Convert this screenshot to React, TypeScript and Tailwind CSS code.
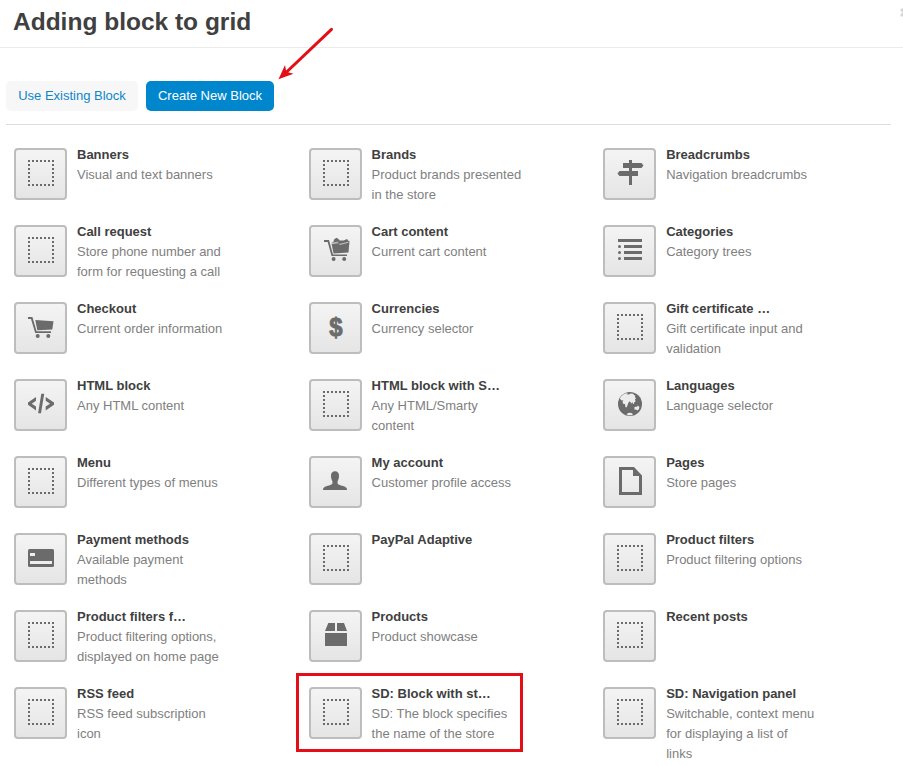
import type { ReactNode } from "react";

const INK = "#6b6b6b";

function Wheels({ x }: { x: number }) {
  return (
    <>
      <circle cx={x} cy={34} r={2} />
      <circle cx={x + 10.6} cy={34} r={2} />
    </>
  );
}

const icons: Record<string, ReactNode> = {
  block: (
    <g stroke={INK} strokeWidth={2} strokeDasharray="2 2" fill="none" shapeRendering="crispEdges">
      <path d="M14 13H40M14 37H40M15 16V36M39 16V36" />
    </g>
  ),
  signpost: (
    <path d="M26 12h3v3h9.500l2 2.500-2 2.500H29v3h6v5h-6v9h-3v-9h-9.500l-2-2.500 2-2.500H26v-3h-6v-5h6z" />
  ),
  cartFull: (
    <>
      <path d="M15 15h5l4 14.500h14V31H22.500L18.700 17H15z" />
      <path d="M22 17.800l2.500-1 .5-2.400 2.400-1.600 2 1.200 1.300 1.400 4 .2 3.300-1.600 1.300 1.800 1.200.2-.3 3.200z" />
      <path d="M22.500 18.500l17.800-.5-.8 9.400-15 1z" />
      <path d="M22.300 18.400l7-1.300M30.500 19.600l9-2.400" stroke="#ededed" strokeWidth=".7" fill="none" />
      <Wheels x={24.6} />
    </>
  ),
  cart: (
    <>
      <path d="M14 15h4.400l4.200 14.300H37V31H21.200L17 17h-3z" />
      <path d="M21.300 18l18.200 1.300-1.200 8.200-15 .7z" />
      <Wheels x={23.7} />
    </>
  ),
  list: (
    <>
      <path d="M15 14h24v3H15zM21 20h18v3H21zM21 26h18v3H21zM21 32h18v3H21z" />
      <circle cx="16.500" cy="21.500" r="1.500" />
      <circle cx="16.500" cy="27.500" r="1.500" />
      <circle cx="16.500" cy="33.500" r="1.500" />
    </>
  ),
  dollar: (
    <text
      transform="translate(27 34) scale(.92 1)"
      textAnchor="middle"
      fontSize="26"
      fontWeight="700"
      stroke={INK}
      strokeWidth=".9"
    >
      $
    </text>
  ),
  code: (
    <>
      <path d="M22 18v3.800l-4.200 2.900 4.200 2.900v3.800l-8-5.600v-2.200zM31.700 18v3.800l4.300 2.900-4.300 2.900v3.800l8.300-5.600v-2.200z" />
      <path d="M27.300 14.700h2.900l-3.200 19.600h-2.900z" />
    </>
  ),
  globe: (
    <>
      <circle cx="27" cy="25" r="12" />
      <path
        fill="#ececec"
        d="M16.800 19.200l1.700-2.300 2.500-1.800 2.600-.8 1.400.4-1 1 1.600-.3 2.200-1 2.400.4 1 1.400 1.200.3-.4 1.500.9 1.400-.9 1 .6 1.900-1.400 1.100-.4 1.800-.9-.8-.7-1.300-1 1.700-.9-2.100-1.200-.1-1.100 2.200-.7 2-.9 1.700-1-.5-.4-2.900-1.900-.4-.6-2 .9-1.500-1.500.2-1.200-.7z"
      />
      <path fill="#ececec" d="M31.400 28.300l1.700-.9.700.6 1.100-1.500 1.500 1.600-.5 2.200-1.600 1.200-1.300-1-1.500.2zM23.600 35.500l1.400-1.400 2-.4 2 .6 1 1.200-1.700.7h-3z" />
    </>
  ),
  page: <path fillRule="evenodd" d="M16 11h15l8 8.500V39H16zM19 14v22h17V20h-6v-6z" />,
  person: (
    <path d="M26 15.300c2.500 0 4 1.700 4 4.500 0 2.500-.6 4-1.400 5.400v2.500c1.500 1.600 5 1.900 7.400 3 1.600.8 2 1.800 2 3.300H14c0-1.500.4-2.500 2-3.300 2.400-1.100 5.900-1.400 7.400-3v-2.500c-.8-1.400-1.400-2.900-1.400-5.400 0-2.800 1.500-4.500 4-4.500z" />
  ),
  card: (
    <>
      <rect x="14" y="16" width="26" height="18" rx="1.500" />
      <path fill="#eee" d="M16 20h5v3h-5zM16 28h22v3H16z" />
    </>
  ),
  box: <path d="M19.300 13H26v8H16zM28 13h7l3 8H28zM16 23h22v13H16z" />,
};

type Item = { title: string; text?: string; icon?: string; marked?: boolean };

const items: Item[] = [
  { title: "Banners", text: "Visual and text banners" },
  { title: "Brands", text: "Product brands presented in the store" },
  { title: "Breadcrumbs", text: "Navigation breadcrumbs", icon: "signpost" },
  { title: "Call request", text: "Store phone number and form for requesting a call" },
  { title: "Cart content", text: "Current cart content", icon: "cartFull" },
  { title: "Categories", text: "Category trees", icon: "list" },
  { title: "Checkout", text: "Current order information", icon: "cart" },
  { title: "Currencies", text: "Currency selector", icon: "dollar" },
  { title: "Gift certificate …", text: "Gift certificate input and validation" },
  { title: "HTML block", text: "Any HTML content", icon: "code" },
  { title: "HTML block with S…", text: "Any HTML/Smarty content" },
  { title: "Languages", text: "Language selector", icon: "globe" },
  { title: "Menu", text: "Different types of menus" },
  { title: "My account", text: "Customer profile access", icon: "person" },
  { title: "Pages", text: "Store pages", icon: "page" },
  { title: "Payment methods", text: "Available payment methods", icon: "card" },
  { title: "PayPal Adaptive" },
  { title: "Product filters", text: "Product filtering options" },
  { title: "Product filters f…", text: "Product filtering options, displayed on home page" },
  { title: "Products", text: "Product showcase", icon: "box" },
  { title: "Recent posts" },
  { title: "RSS feed", text: "RSS feed subscription icon" },
  { title: "SD: Block with st…", text: "SD: The block specifies the name of the store", marked: true },
  { title: "SD: Navigation panel", text: "Switchable, context menu for displaying a list of links" },
];

function BlockItem({ title, text, icon = "block", marked }: Item) {
  return (
    <div className="relative flex h-[77px] items-start">
      <div className="mt-[3px] h-[52px] w-[53px] shrink-0 rounded-[4px] border-2 border-[#bdbdbd] bg-linear-to-b from-[#f4f4f4] to-[#e5e5e5]">
        <svg className="block h-[48px] w-[49px]" viewBox="2 2 49 48" fill={INK}>
          {icons[icon]}
        </svg>
      </div>
      <div className="ml-[10px] w-[150px] text-[13px] leading-5">
        <div className="font-bold whitespace-nowrap text-[#404040]">{title}</div>
        <div className="text-[#808080]">{text}</div>
      </div>
      {marked && (
        <div className="absolute -top-[11px] -left-[13px] h-[79px] w-[227px] border-3 border-[#e30e17]" />
      )}
    </div>
  );
}

export default function App() {
  return (
    <div className="relative h-[766px] w-[903px] overflow-hidden bg-white font-['Liberation_Sans',Arial,sans-serif]">
      <header className="flex h-12 items-start justify-between border-b border-[#eaeaea] pl-[13px]">
        <h1 className="pt-[7px] text-[24.5px] leading-[30px] font-bold text-[#404040]">Adding block to grid</h1>
        <svg className="mt-2 -mr-[6px] h-[9px] w-[9px]" viewBox="0 0 9 9" stroke="#d6d6d6" strokeWidth="3">
          <path d="M1 1l7 7M8 1L1 8" />
        </svg>
      </header>

      <div className="mr-3 ml-[6px] flex gap-2 border-b border-[#dcdcdc] pt-[33px] pb-[13px] text-[13px] leading-[30px]">
        <button className="h-[30px] w-[132px] rounded-[5px] bg-[#f7f7f7] text-[#0d86cb]">Use Existing Block</button>
        <button className="h-[30px] w-[128px] rounded-[5px] bg-[#0086cc] text-white">Create New Block</button>
      </div>

      <main className="ml-[14px] grid w-[883.7px] grid-cols-3 pt-5">
        {items.map((item) => (
          <BlockItem key={item.title} {...item} />
        ))}
      </main>

      <svg className="absolute top-[24px] left-[274px] h-[60px] w-[64px]" viewBox="274 24 64 60" fill="#e30e17">
        <path d="M331.500 29.300L285 73.500" stroke="#e30e17" strokeWidth="3" strokeLinecap="round" />
        <path d="M278.500 79.300L285 65l1.300 6.700 7.200 2z" />
      </svg>
    </div>
  );
}
